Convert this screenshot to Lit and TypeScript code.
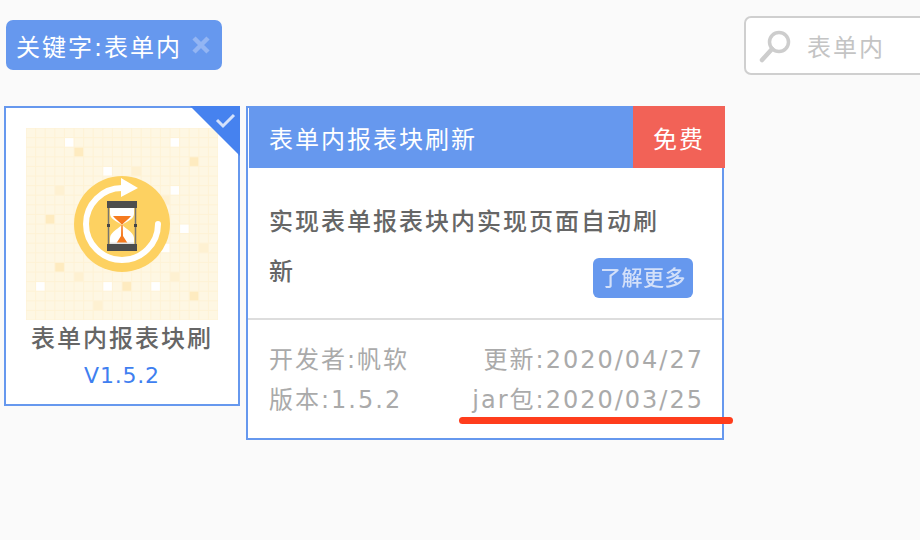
import { LitElement, html, css, svg } from "lit";
import { customElement } from "lit/decorators.js";

const LIGHT = "#fef1d2";
const ORANGE = "#feebc0";
const whites = [[4,1],[15,1],[8,4],[15,6],[16,10],[14,12],[1,16],[8,16],[13,16]];
const tints: [number, number, string][] = [
  [5,2,ORANGE],[17,3,ORANGE],[11,4,LIGHT],[3,6,LIGHT],[14,7,LIGHT],[2,9,ORANGE],[18,12,LIGHT],
  [3,14,ORANGE],[5,15,LIGHT],[15,15,LIGHT],[10,16,ORANGE],[17,17,ORANGE],[7,18,LIGHT],
];
const C = 9.6;
const cell = (c: number, r: number, f: string) =>
  svg`<rect x=${c * C} y=${r * C} width=${C} height=${C} fill=${f}></rect>`;
const gridLines = Array.from({ length: 21 }, (_, i) => i * C);

@customElement("app-root")
export class AppRoot extends LitElement {
  static styles = css`
    :host {
      display: block;
      width: 920px;
      height: 540px;
      overflow: hidden;
      background: #fafafa;
      font-family: "DejaVu Sans", "Noto Sans CJK SC", sans-serif;
      font-size: 24px;
      letter-spacing: 2px;
    }
    .top {
      display: flex;
      justify-content: space-between;
      align-items: center;
      height: 60px;
      padding: 15px 0 0 6px;
    }
    .tag {
      display: flex;
      align-items: center;
      box-sizing: border-box;
      width: 216px;
      height: 50px;
      padding-left: 10px;
      gap: 9px;
      border-radius: 7px;
      background: #6698ee;
      color: #fff;
      white-space: nowrap;
    }
    .tag svg { flex: none; }
    .search {
      display: flex;
      align-items: center;
      align-self: flex-end;
      box-sizing: border-box;
      flex: none;
      width: 190px;
      height: 59px;
      margin-right: -14px;
      padding-left: 12px;
      gap: 13px;
      border: 2px solid #cfcfcf;
      border-radius: 7px;
      background: #fff;
      color: #c4c4c4;
    }
    .cards {
      display: flex;
      align-items: flex-start;
      gap: 6px;
      margin: 31px 0 0 4px;
    }
    .plugin {
      position: relative;
      display: flex;
      flex-direction: column;
      align-items: center;
      box-sizing: border-box;
      width: 236px;
      height: 300px;
      padding-top: 20px;
      border: 2px solid #6698ee;
      background: #fff;
    }
    .plugin svg.art { display: block; }
    .name {
      margin-top: 1px;
      line-height: 36px;
      color: #666;
      font-weight: 500;
      white-space: nowrap;
    }
    .ver {
      font-size: 22px;
      line-height: 38px;
      color: #3f7ff0;
      letter-spacing: 0.8px;
    }
    .corner { position: absolute; top: -2px; right: -2px; }
    .detail {
      box-sizing: border-box;
      width: 478px;
      height: 334px;
      border: 2px solid #6698ee;
      background: #fff;
    }
    .head {
      display: flex;
      justify-content: space-between;
      align-items: center;
      height: 62px;
      margin: -2px -3px 0 1px;
      padding-left: 20px;
      background: #6698ee;
      color: #fff;
    }
    .free {
      display: flex;
      align-items: center;
      justify-content: center;
      width: 92px;
      height: 100%;
      background: #f26257;
    }
    .body {
      display: flex;
      flex-direction: column;
      box-sizing: border-box;
      height: 152px;
      padding: 29px 29px 0 21px;
      border-bottom: 2px solid #ddd;
      color: #666;
      font-weight: 500;
    }
    .desc {
      margin: 0;
      max-width: 400px;
      line-height: 50px;
    }
    .more {
      align-self: flex-end;
      box-sizing: border-box;
      width: 100px;
      height: 40px;
      margin-top: -39px;
      border-radius: 6px;
      background: #6698ee;
      color: #d3e0f9;
      font-size: 21px;
      letter-spacing: 0.5px;
      line-height: 40px;
      text-align: center;
      filter: blur(0.5px);
    }
    .foot {
      position: relative;
      display: grid;
      grid-template-columns: auto auto;
      justify-content: space-between;
      padding: 20px 18px 0 21px;
      color: #aaa;
      line-height: 40px;
    }
    .foot .r { text-align: right; }
    .line {
      position: absolute;
      left: 211px;
      top: 97px;
      width: 274px;
      height: 7px;
      border-radius: 4px;
      background: #ff3d1c;
    }
  `;

  private art() {
    return html`<svg class="art" width="192" height="192" viewBox="0 0 192 192">
      <rect width="192" height="192" fill="#fef7e3"></rect>
      ${whites.map(([c, r]) => cell(c, r, "#ffffff"))}
      ${tints.map(([c, r, f]) => cell(c, r, f))}
      ${gridLines.map(
        (p) => svg`<path d="M${p} 0V192M0 ${p}H192" stroke="#fef2d6" stroke-width="1" fill="none"></path>`
      )}
      <circle cx="96" cy="96" r="48" fill="#fdd161"></circle>
      <path d="M132 96A36 36 0 1 1 96 60" fill="none" stroke="#fff" stroke-width="6" stroke-linecap="round"></path>
      <path d="M95 50L112 60L95 69Z" fill="#fff"></path>
      <path d="M84 80H108V86C108 92 97 95 96.500 97C97 99 108 104 108 110V116H84V110C84 104 95 99 95.500 97C95 95 84 92 84 86Z" fill="#fff"></path>
      <path d="M87 88H105C103 91 98 94 96 97C94 94 89 91 87 88Z" fill="#f57a1f"></path>
      <path d="M95.300 97H96.700L97 108L101.500 115H90.500L95 108Z" fill="#f57a1f"></path>
      <rect x="84" y="114.500" width="24" height="2" fill="#e3e3e3"></rect>
      <path d="M82.500 78V118M109.500 78V118" stroke="#77766f" stroke-width="1.500"></path>
      <rect x="81" y="73" width="30" height="7" fill="#4d4d4d"></rect>
      <rect x="81" y="116" width="30" height="7" fill="#4d4d4d"></rect>
      <rect x="81" y="96" width="3" height="3" fill="#444"></rect>
      <rect x="108" y="96" width="3" height="3" fill="#444"></rect>
    </svg>`;
  }

  render() {
    return html`
      <div class="top">
        <div class="tag">
          <span>关键字:表单内</span>
          <svg width="20" height="20" viewBox="0 0 20 20">
            <path d="M3 3L17 17M17 3L3 17" stroke="#93b5f3" stroke-width="4.500" fill="none"></path>
          </svg>
        </div>
        <div class="search">
          <svg width="36" height="36" viewBox="0 0 36 36">
            <circle cx="21" cy="14" r="9.500" fill="none" stroke="#cdcdcd" stroke-width="3.500"></circle>
            <path d="M14 21L4 32" stroke="#cdcdcd" stroke-width="4.500" stroke-linecap="round" fill="none"></path>
          </svg>
          <span>表单内</span>
        </div>
      </div>
      <div class="cards">
        <div class="plugin">
          ${this.art()}
          <div class="name">表单内报表块刷</div>
          <div class="ver">V1.5.2</div>
          <svg class="corner" width="50" height="50" viewBox="0 0 50 50">
            <path d="M0 0H50V50Z" fill="#4682ef"></path>
            <path d="M27 14L33 20L44 9" stroke="#d5e2fb" stroke-width="3" fill="none"></path>
          </svg>
        </div>
        <div class="detail">
          <div class="head">
            <span>表单内报表块刷新</span>
            <span class="free">免费</span>
          </div>
          <div class="body">
            <p class="desc">实现表单报表块内实现页面自动刷新</p>
            <div class="more">了解更多</div>
          </div>
          <div class="foot">
            <span>开发者:帆软</span>
            <span class="r">更新:2020/04/27</span>
            <span>版本:1.5.2</span>
            <span class="r">jar包:2020/03/25</span>
            <div class="line"></div>
          </div>
        </div>
      </div>
    `;
  }
}
